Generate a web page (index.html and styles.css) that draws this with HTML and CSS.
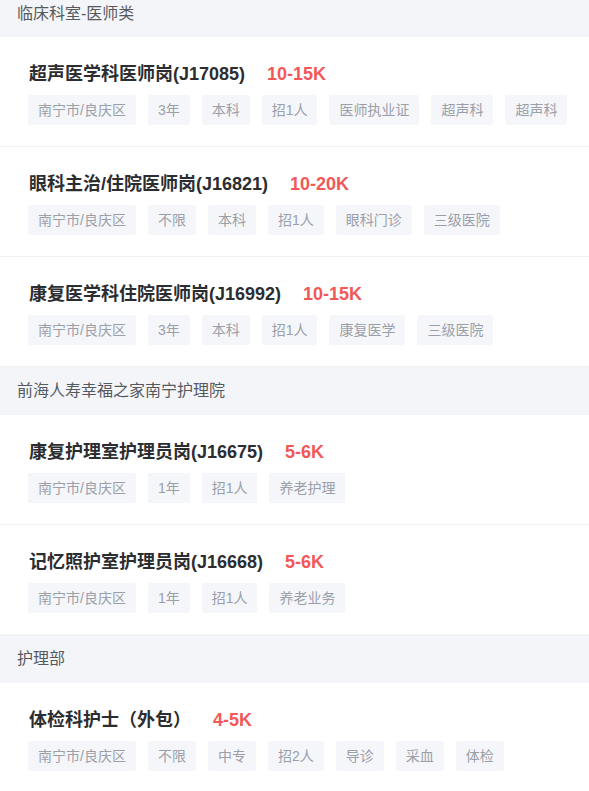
FILE: index.html
```html
<!DOCTYPE html>
<html lang="zh-CN">
<head>
<meta charset="utf-8">
<link rel="stylesheet" href="styles.css">
</head>
<body>
<div class="list">
  <div class="group-head first">临床科室-医师类</div>
  <div class="job">
    <div class="job-title"><span class="name">超声医学科医师岗(J17085)</span><span class="salary">10-15K</span></div>
    <div class="tags"><span class="tag">南宁市/良庆区</span><span class="tag">3年</span><span class="tag">本科</span><span class="tag">招1人</span><span class="tag">医师执业证</span><span class="tag">超声科</span><span class="tag">超声科</span></div>
  </div>
  <div class="job">
    <div class="job-title"><span class="name">眼科主治/住院医师岗(J16821)</span><span class="salary">10-20K</span></div>
    <div class="tags"><span class="tag">南宁市/良庆区</span><span class="tag">不限</span><span class="tag">本科</span><span class="tag">招1人</span><span class="tag">眼科门诊</span><span class="tag">三级医院</span></div>
  </div>
  <div class="job">
    <div class="job-title"><span class="name">康复医学科住院医师岗(J16992)</span><span class="salary">10-15K</span></div>
    <div class="tags"><span class="tag">南宁市/良庆区</span><span class="tag">3年</span><span class="tag">本科</span><span class="tag">招1人</span><span class="tag">康复医学</span><span class="tag">三级医院</span></div>
  </div>

  <div class="group-head">前海人寿幸福之家南宁护理院</div>
  <div class="job">
    <div class="job-title"><span class="name">康复护理室护理员岗(J16675)</span><span class="salary">5-6K</span></div>
    <div class="tags"><span class="tag">南宁市/良庆区</span><span class="tag">1年</span><span class="tag">招1人</span><span class="tag">养老护理</span></div>
  </div>
  <div class="job">
    <div class="job-title"><span class="name">记忆照护室护理员岗(J16668)</span><span class="salary">5-6K</span></div>
    <div class="tags"><span class="tag">南宁市/良庆区</span><span class="tag">1年</span><span class="tag">招1人</span><span class="tag">养老业务</span></div>
  </div>

  <div class="group-head">护理部</div>
  <div class="job">
    <div class="job-title"><span class="name">体检科护士（外包）</span><span class="salary">4-5K</span></div>
    <div class="tags"><span class="tag">南宁市/良庆区</span><span class="tag">不限</span><span class="tag">中专</span><span class="tag">招2人</span><span class="tag">导诊</span><span class="tag">采血</span><span class="tag">体检</span></div>
  </div>
</div>
</body>
</html>
```

FILE: styles.css
```css
* { box-sizing: border-box; }
html, body {
  margin: 0;
  padding: 0;
  background: #ffffff;
  overflow: hidden;
}
body {
  font-family: "Liberation Sans", "Noto Sans CJK SC", sans-serif;
}
.list {
  display: flex;
  flex-direction: column;
  margin-top: -11px;
}
.group-head {
  height: 48px;
  line-height: 48px;
  padding-left: 17px;
  background: #f4f5f8;
  color: #555a61;
  font-size: 16px;
}
.group-head.first {
  line-height: 50px;
}
.job {
  padding: 24px 20px 21px 28px;
  border-bottom: 1px solid #f0f1f3;
}
.job-title {
  display: flex;
  align-items: center;
  height: 26px;
  line-height: 26px;
  padding-left: 1px;
}
.name {
  font-size: 18px;
  font-weight: bold;
  color: #2b2d31;
}
.salary {
  margin-left: 22px;
  font-size: 18px;
  font-weight: bold;
  color: #f25858;
}
.tags {
  display: flex;
  gap: 12px;
  margin-top: 8px;
}
.tag {
  height: 30px;
  line-height: 30px;
  padding: 0 10px;
  background: #f5f6f9;
  color: #9a9fa9;
  font-size: 14px;
  border-radius: 2px;
  white-space: nowrap;
}
```
